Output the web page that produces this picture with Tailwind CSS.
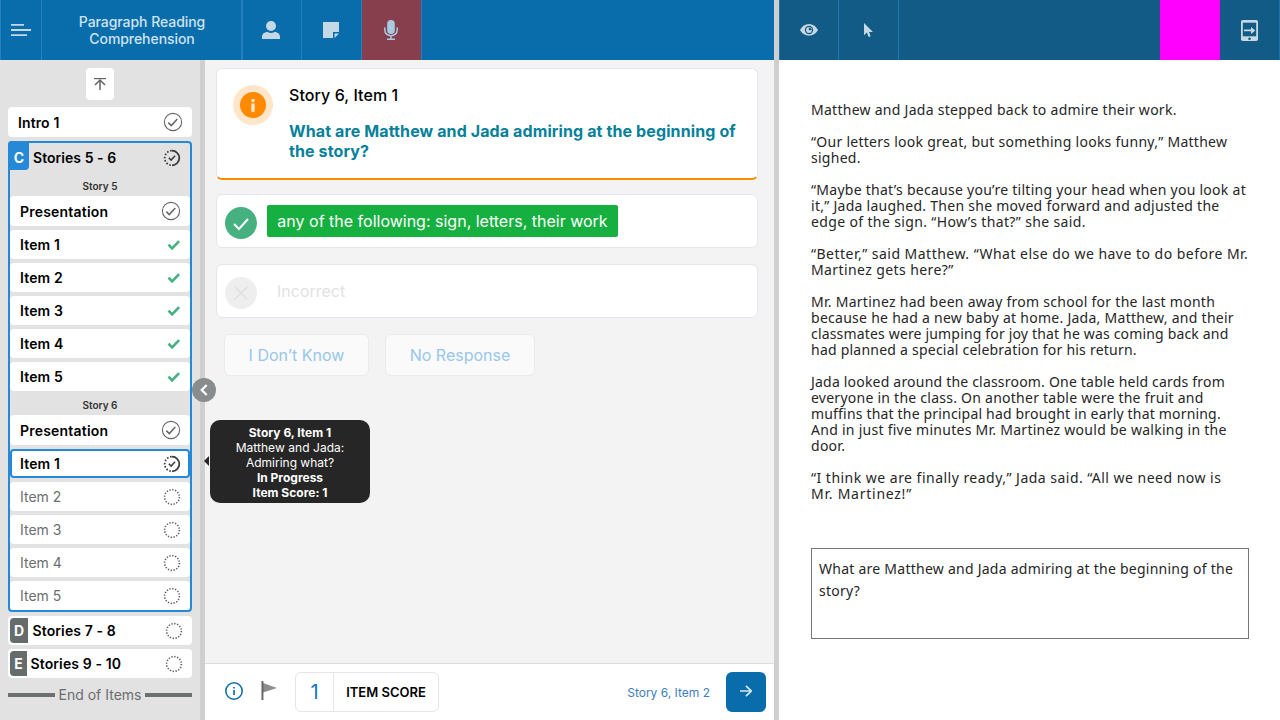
<!DOCTYPE html>
<html lang="en">
<head>
<meta charset="utf-8">
<title>Paragraph Reading Comprehension</title>
<script src="https://cdn.jsdelivr.net/npm/@tailwindcss/browser@4"></script>
</head>
<body class="h-[720px] w-[1280px] overflow-hidden bg-white font-['Inter',sans-serif] text-black">
<svg class="hidden">
  <symbol id="done" viewBox="0 0 20 20"><circle cx="10" cy="10" r="8.6" fill="none" stroke="#666" stroke-width="1.1"/><path d="M5.3 10.6l3 3 6-6.6" fill="none" stroke="#666" stroke-width="1.5"/></symbol>
  <symbol id="progress" viewBox="0 0 18 18"><path d="M9 1.700a7.300 7.300 0 0 1 0 14.600" fill="none" stroke="#3c3c3c" stroke-width="1.800"/><path d="M9 16.300a7.300 7.300 0 0 1 0-14.600" fill="none" stroke="#3c3c3c" stroke-width="1.800" stroke-dasharray="1.600 1.680" stroke-dashoffset="-1.200"/><path d="M5.800 8.800l2.300 2.300 4-4.300" fill="none" stroke="#3c3c3c" stroke-width="1.500"/></symbol>
  <symbol id="todo" viewBox="0 0 18 18"><circle cx="9" cy="9" r="7.400" fill="none" stroke="#5c5c5c" stroke-width="1.600" stroke-dasharray="1.300 1.606"/></symbol>
  <symbol id="tick" viewBox="0 0 14 12"><path d="M1.500 5.600l3.600 3.700 7-7.200" fill="none" stroke="#45b081" stroke-width="2.600"/></symbol>
</svg>
<div class="flex h-full">
  <div class="flex w-[774px] flex-none flex-col">
    <header class="flex h-[60px] flex-none bg-[#096dab]">
      <button class="flex w-[42px] items-center border-x border-[#2581bd] pl-[10px]">
        <svg class="h-3 w-5" viewBox="0 0 20 12" fill="#c5d8e6"><path d="M0 0h13v1.800H0zM0 5.100h20v1.800H0zM0 10.200h16V12H0z"/></svg>
      </button>
      <h1 class="flex w-[201px] items-center justify-center border-r-2 border-[#2581bd] pl-px text-center text-[14px]/[17px] font-medium tracking-[-0.06px] text-[#cfe3f1]">Paragraph Reading<br>Comprehension</h1>
      <button class="flex w-[59px] items-center justify-center border-r border-[#2581bd] pr-[2px]">
        <svg class="h-[18px] w-[18px]" viewBox="0 0 18 18" fill="#c5d8e6"><circle cx="9" cy="5" r="5"/><path d="M0 18v-2.200C0 12.500 3 11 5.500 11c1.100.7 2.200 1 3.500 1s2.400-.3 3.500-1c2.500 0 5.500 1.500 5.500 4.800V18z"/></svg>
      </button>
      <button class="flex w-[60px] items-center justify-center border-r border-[#2581bd] pr-px">
        <svg class="h-4 w-4" viewBox="0 0 16 16" fill="#c5d8e6"><path d="M0 0h16v10h-6v6H0zM11.500 11.500H16L11.500 16z"/></svg>
      </button>
      <button class="flex w-[60px] items-center justify-center border-r border-[#2581bd] bg-[#873e4d] pr-px">
        <svg class="h-5 w-[14px]" viewBox="0 0 14 20"><rect x="3.200" width="7.600" height="14" rx="3.800" fill="#a9cbe2"/><path d="M.8 7.500v2.700a6.200 5.600 0 0 0 12.400 0V7.500M7 16v3M3 19.200h8" fill="none" stroke="#a9cbe2" stroke-width="1.500"/></svg>
      </button>
    </header>
    <div class="flex min-h-0 flex-1">
      <aside class="relative w-[205px] flex-none border-r-[5px] border-[#cfcfcf] bg-[#e2e2e2] px-2 pt-2 text-[14px]/[20px] font-semibold tracking-[0.12px]">
        <button class="mx-auto flex h-8 w-7 items-center justify-center rounded bg-white">
          <svg class="h-3 w-3" viewBox="0 0 12 12" fill="none" stroke="#666"><path d="M0 .6h12" stroke-width="1.200"/><path d="M6 12V2M1 7l5-5 5 5" stroke-width="1.500"/></svg>
        </button>
        <div class="mt-[7px] flex h-[30px] items-center justify-between rounded bg-white pr-[9px] pl-[10px]"><span class="pt-px">Intro 1</span><svg class="size-5"><use href="#done"/></svg></div>
        <section class="mt-1 h-[471px] rounded border-2 border-[#2689d8]">
          <div class="flex h-[35px] items-start">
            <span class="-mt-[2px] -ml-[2px] flex h-[29px] w-[21px] items-center justify-center rounded-tl rounded-br bg-[#2689d8] pt-1 pl-px font-bold text-white">C</span>
            <span class="ml-1 pt-[5px] tracking-[0.05px]">Stories 5 - 6</span><svg class="mt-[6px] mr-[9px] ml-auto size-[18px]"><use href="#progress"/></svg>
          </div>
          <h2 class="h-[18px] text-center text-[10px]/[17px] tracking-normal text-[#333]">Story 5</h2>
          <div class="flex flex-col gap-1">
            <div class="flex h-[30px] items-center justify-between rounded bg-white pr-[9px] pl-[10px]"><span class="pt-[2px] tracking-[0.2px]">Presentation</span><svg class="size-5"><use href="#done"/></svg></div>
            <div class="flex h-[29px] items-center justify-between rounded bg-white pr-[9px] pl-[10px]"><span class="pt-px">Item 1</span><svg class="h-3 w-[14px]"><use href="#tick"/></svg></div>
            <div class="flex h-[29px] items-center justify-between rounded bg-white pr-[9px] pl-[10px]"><span class="pt-px">Item 2</span><svg class="h-3 w-[14px]"><use href="#tick"/></svg></div>
            <div class="flex h-[29px] items-center justify-between rounded bg-white pr-[9px] pl-[10px]"><span class="pt-px">Item 3</span><svg class="h-3 w-[14px]"><use href="#tick"/></svg></div>
            <div class="flex h-[29px] items-center justify-between rounded bg-white pr-[9px] pl-[10px]"><span class="pt-px">Item 4</span><svg class="h-3 w-[14px]"><use href="#tick"/></svg></div>
            <div class="flex h-[29px] items-center justify-between rounded bg-white pr-[9px] pl-[10px]"><span class="pt-px">Item 5</span><svg class="h-3 w-[14px]"><use href="#tick"/></svg></div>
          </div>
          <h2 class="h-6 pt-[6px] text-center text-[10px]/[17px] tracking-normal text-[#333]">Story 6</h2>
          <div class="flex flex-col gap-1">
            <div class="flex h-[30px] items-center justify-between rounded bg-white pr-[9px] pl-[10px]"><span class="pt-[2px] tracking-[0.2px]">Presentation</span><svg class="size-5"><use href="#done"/></svg></div>
            <div class="flex h-[29px] items-center justify-between rounded border-2 border-[#2689d8] bg-white pr-[7px] pl-2"><span class="pt-px">Item 1</span><svg class="size-[18px]"><use href="#progress"/></svg></div>
            <div class="flex h-[29px] items-center justify-between rounded bg-white pr-[9px] pl-[10px] font-normal tracking-normal text-[#6b6f6f]"><span class="pt-px">Item 2</span><svg class="size-[18px]"><use href="#todo"/></svg></div>
            <div class="flex h-[29px] items-center justify-between rounded bg-white pr-[9px] pl-[10px] font-normal tracking-normal text-[#6b6f6f]"><span class="pt-px">Item 3</span><svg class="size-[18px]"><use href="#todo"/></svg></div>
            <div class="flex h-[29px] items-center justify-between rounded bg-white pr-[9px] pl-[10px] font-normal tracking-normal text-[#6b6f6f]"><span class="pt-px">Item 4</span><svg class="size-[18px]"><use href="#todo"/></svg></div>
            <div class="flex h-[29px] items-center justify-between rounded bg-white pr-[9px] pl-[10px] font-normal tracking-normal text-[#6b6f6f]"><span class="pt-px">Item 5</span><svg class="size-[18px]"><use href="#todo"/></svg></div>
          </div>
        </section>
        <div class="mt-1 flex h-[29px] items-center rounded bg-white pr-[9px] pl-[2px]"><span class="flex h-[25px] w-[18px] items-center justify-center rounded-l bg-[#666b6b] pt-px font-bold text-white">D</span><span class="ml-[4.5px] pt-px">Stories 7 - 8</span><svg class="ml-auto size-[18px]"><use href="#todo"/></svg></div>
        <div class="mt-1 flex h-[29px] items-center rounded bg-white pr-[9px] pl-[2px]"><span class="flex h-[25px] w-[17px] items-center justify-center rounded-l bg-[#666b6b] pt-px font-bold text-white">E</span><span class="ml-[3.5px] pt-px">Stories 9 - 10</span><svg class="ml-auto size-[18px]"><use href="#todo"/></svg></div>
        <div class="mt-[7px] flex items-center gap-1 font-normal tracking-normal text-[#6b6f6f]"><i class="h-1 flex-1 bg-[#6b7070]"></i><span class="whitespace-nowrap">End of Items</span><i class="h-1 flex-1 bg-[#6b7070]"></i></div>
        <!-- collapse handle and item tooltip float over the divider -->
        <button class="absolute top-[318px] left-[192px] z-10 flex size-6 items-center justify-center rounded-full bg-[#888c8c]"><svg class="h-3 w-2" viewBox="0 0 8 12"><path d="M6.700 1L1.700 6l5 5" fill="none" stroke="#fff" stroke-width="2.200"/></svg></button>
        <div class="absolute top-[360.4px] left-[210px] z-10 h-[83px] w-[160px] rounded-[10px] bg-[#262626] pt-[4.6px] text-center text-[12px]/[15px] font-normal tracking-normal text-white">
          <b>Story 6, Item 1</b><br><span class="tracking-[0.05px]">Matthew and Jada:</span><br>Admiring what?<br><b>In Progress</b><br><b>Item Score: 1</b>
          <svg class="absolute top-[36px] -left-[6px] h-[10px] w-[5px]" viewBox="0 0 5 10"><path d="M5 0L0 5l5 5z" fill="#262626"/></svg>
        </div>
      </aside>
      <main class="flex flex-1 flex-col bg-[#f3f3f3]">
        <div class="flex-1 px-[11px] pt-2 pr-4">
          <section class="flex h-[112px] rounded-md border border-b-2 border-[#e3e5f1] border-b-[#fb8c00] bg-white pt-4 pl-4">
            <svg class="size-10 flex-none" viewBox="0 0 40 40"><circle cx="20" cy="20" r="20" fill="#ffe6ca"/><circle cx="20" cy="20" r="13" fill="#ff8a00"/><g fill="#ffe6ca"><circle cx="20" cy="15.600" r="1.800"/><path d="M18.300 18.500h3.400v8.300h-3.400z"/></g></svg>
            <div class="ml-4 text-[16px]/[20px]"><p class="font-medium tracking-[0.08px]">Story 6, Item 1</p><p class="mt-4 font-bold tracking-[0.11px] text-[#07819a]">What are Matthew and Jada admiring at the beginning of<br>the story?</p></div>
          </section>
          <div class="mt-[14px] flex h-[54px] rounded-md border border-[#e3e5f1] bg-white pl-2">
            <svg class="mt-3 size-8" viewBox="0 0 32 32"><circle cx="16" cy="16" r="16" fill="#46b080"/><path d="M9 17l5 5 9-10" fill="none" stroke="#fff" stroke-width="2"/></svg>
            <span class="mt-[10px] ml-[10px] h-8 w-[351px] rounded-[2px] bg-[#16b040] text-center text-[16px]/[33px] whitespace-nowrap text-white">any of the following: sign, letters, their work</span>
          </div>
          <div class="mt-4 flex h-[54px] rounded-md border border-[#e3e5f1] bg-white pl-2">
            <svg class="mt-3 size-8" viewBox="0 0 32 32"><circle cx="16" cy="16" r="16" fill="#eee"/><path d="M9.500 9.500l13 13M22.500 9.500l-13 13" fill="none" stroke="#e0e0e0" stroke-width="1.600"/></svg>
            <span class="mt-[10px] ml-5 text-[16px]/[33px] text-[#e2e2e2]">Incorrect</span>
          </div>
          <div class="mt-4 ml-2 flex gap-4 text-[16px]/[20px] text-[#98c7eb]">
            <button class="h-[42px] w-[145px] rounded-md border border-[#ebebeb] bg-[#fafafa]">I Don’t Know</button>
            <button class="h-[42px] w-[150px] rounded-md border border-[#ebebeb] bg-[#fafafa]">No Response</button>
          </div>
        </div>
        <footer class="flex h-[57px] items-center border-t border-[#dedede] bg-white pr-2 pl-5">
          <svg class="-mt-[2px] size-[18px]" viewBox="0 0 18 18"><circle cx="9" cy="9" r="8.200" fill="none" stroke="#0f70ac" stroke-width="1.600"/><path d="M8.200 4.900h1.700v1.600H8.200zM8.200 8h1.700v5H8.200z" fill="#0f70ac"/></svg>
          <svg class="-mt-[3px] ml-[18px] h-[19px] w-4" viewBox="0 0 16 19"><path d="M2 2l14 5-14 4.500z" fill="#8d8d8d"/><path d="M.5 0h1.900v19H.5z" fill="#606464"/></svg>
          <div class="ml-[18px] flex h-10 w-[144px] rounded-md border border-[#e3e5f1]"><span class="w-[38px] border-r border-[#e3e5f1] text-center text-[20px]/[38px] text-[#1576b8]">1</span><span class="flex-1 text-center text-[13px]/[39px] font-semibold">ITEM SCORE</span></div>
          <span class="ml-auto pt-px text-[12px] text-[#3e80bb]">Story 6, Item 2</span>
          <button class="ml-4 flex size-10 items-center justify-center rounded-md bg-[#096dab]"><svg class="mb-0.5 h-3 w-3" viewBox="0 0 12 12"><path d="M0 6h11M6 .8L11.200 6 6 11.200" fill="none" stroke="#d9e8f2" stroke-width="1.700"/></svg></button>
        </footer>
      </main>
    </div>
  </div>
  <div class="w-[5px] flex-none bg-[#cfcfcf]"></div>
  <div class="flex-1">
    <header class="flex h-[60px] border-x border-[#1b73aa] bg-[#125b87]">
      <button class="flex w-[59px] items-center justify-center border-r border-[#1f7ab3]"><svg class="h-3 w-[18px]" viewBox="0 0 18 12"><path d="M0 6c4-8 14-8 18 0-4 7.500-14 7.500-18 0z" fill="#c8d8e2"/><circle cx="9" cy="6" r="4.200" fill="#125b87"/><circle cx="9" cy="6" r="2.900" fill="#c8d8e2"/><path d="M8.800 3.500v2.700h2.700a2.700 2.700 0 0 0-2.700-2.700z" fill="#125b87"/></svg></button>
      <button class="flex w-[60px] items-center justify-center border-r border-[#1f7ab3]"><svg class="h-[14px] w-[9px]" viewBox="0 0 9 14"><path d="M0 0v12.300l2.800-2.700L4.700 14l2-.8L5 9h4z" fill="#c8d8e2"/></svg></button>
      <div class="ml-auto w-[60px] bg-[#ff00ff]"></div>
      <button class="flex w-[59px] items-center justify-center"><svg class="h-[21px] w-[17px]" viewBox="0 0 17 21"><rect width="17" height="21" rx="1.800" fill="#c8d8e2"/><path d="M1.800 2.700h13.400v13.600H1.800z" fill="#125b87"/><path d="M3 9.600h7V7l4.300 3.500L10 14v-2.700H3z" fill="#c8d8e2"/><circle cx="8.500" cy="18.700" r="1.300" fill="#125b87"/></svg></button>
    </header>
    <article class="flex flex-col gap-4 pt-[42px] pl-8 font-['Noto_Sans',sans-serif] text-[14px]/[16px] tracking-[0.27px] whitespace-nowrap text-[#262626]">
      <p>Matthew and Jada stepped back to admire their work.</p>
      <p>“Our letters look great, but something looks funny,” Matthew<br>sighed.</p>
      <p class="tracking-[0.27px]">“Maybe that’s because you’re tilting your head when you look at<br>it,” Jada laughed. Then she moved forward and adjusted the<br><span class="tracking-[0.36px]">edge of the sign. “How’s that?” she said.</span></p>
      <p class="tracking-[0.48px]">“Better,” said Matthew. “What else do we have to do before Mr.<br><span class="tracking-[0.4px]">Martinez gets here?”</span></p>
      <p>Mr. Martinez had been away from school for the last month<br>because he had a new baby at home. Jada, Matthew, and their<br><span class="tracking-[0.17px]">classmates were jumping for joy that he was coming back and</span><br><span class="tracking-[0.23px]">had planned a special celebration for his return.</span></p>
      <p><span class="tracking-[0.2px]">Jada looked around the classroom. One table held cards from</span><br><span class="tracking-[0.25px]">everyone in the class. On another table were the fruit and</span><br><span class="tracking-[0.18px]">muffins that the principal had brought in early that morning.</span><br>And in just five minutes Mr. Martinez would be walking in the<br>door.</p>
      <p class="tracking-[0.48px]">“I think we are finally ready,” Jada said. “All we need now is<br><span class="tracking-[0.75px]">Mr. Martinez!”</span></p>
      <div class="mt-[30px] h-[91px] w-[438px] border border-[#777] px-[7px] pt-[9px] text-[14px]/[22px] tracking-[0.25px]">What are Matthew and Jada admiring at the beginning of the<br>story?</div>
    </article>
  </div>
</div>
</body>
</html>
